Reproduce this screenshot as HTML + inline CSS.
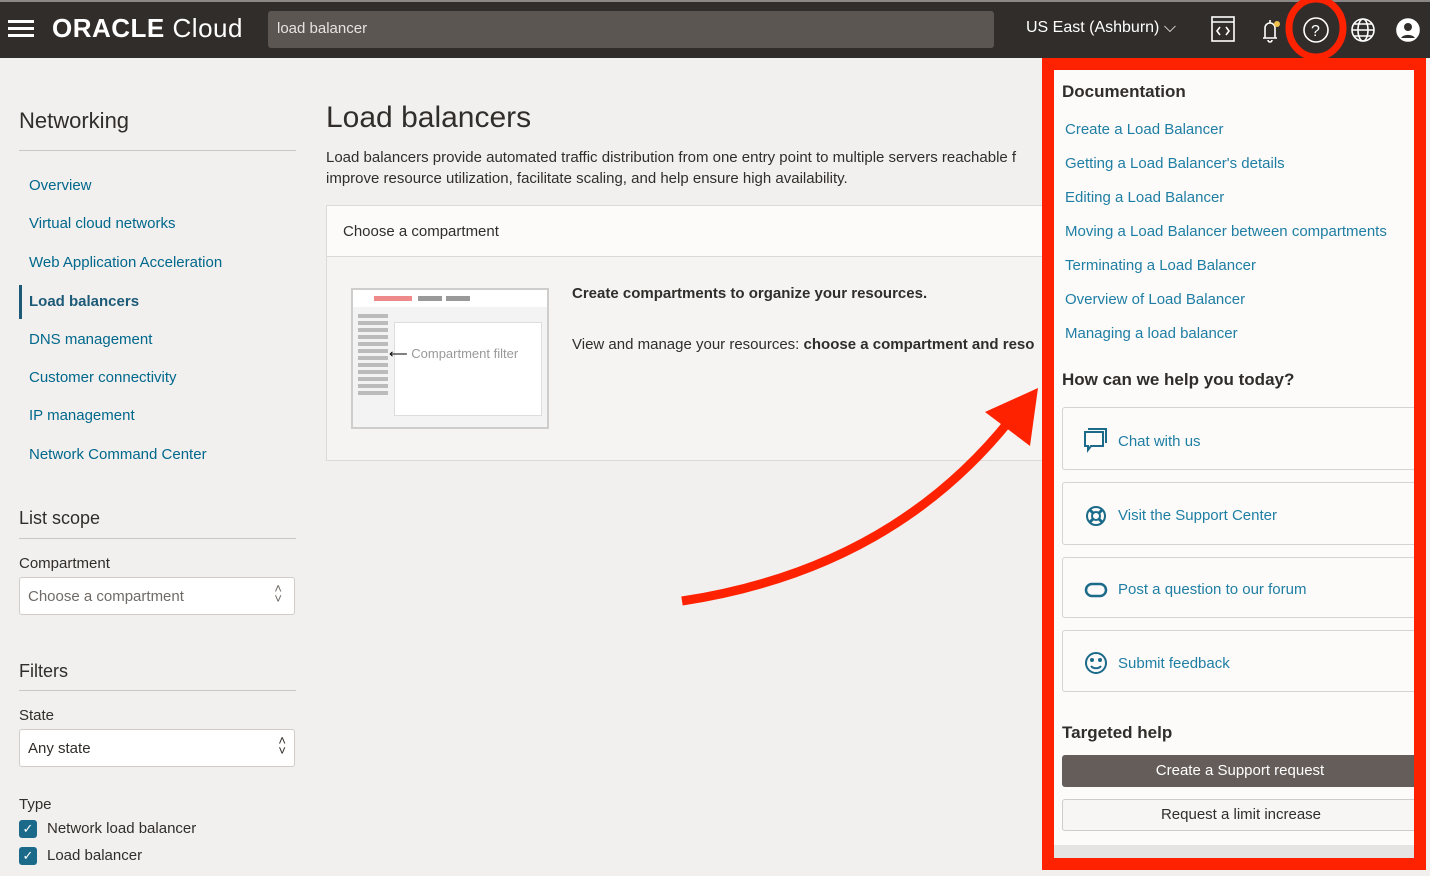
<!DOCTYPE html>
<html><head><meta charset="utf-8"><style>
*{box-sizing:border-box;margin:0;padding:0}
body{width:1430px;height:876px;overflow:hidden;background:#f2f0ee;font-family:"Liberation Sans",sans-serif;color:#312d2a;position:relative}
.abs{position:absolute}
.hdr{left:0;top:0;width:1430px;height:58px;background:#312d2a;border-top:2px solid #8a8886}
.nav a{position:absolute;left:29px;font-size:15px;color:#00688c;text-decoration:none}
.lnk{position:absolute;left:1065px;font-size:15px;color:#1f7ea3}
.card{position:absolute;left:1062px;width:370px;background:#fcfbfa;border:1.5px solid #d6d3d0;border-radius:3px;font-size:15px;color:#1f7ea3}
.card span{position:absolute;left:55px}
.sel{position:absolute;left:19px;width:276px;height:38px;background:#fff;border:1px solid #cfccc9;border-radius:3px;font-size:15px;padding:10px 8px}
.chk{position:absolute;left:19px;width:18px;height:18px;background:#1c6a8a;border-radius:3px;color:#fff;font-size:13px;text-align:center;line-height:18px}
</style></head><body>
<div class="abs hdr">
 <div class="abs" style="left:8px;top:18px;width:26px;height:3px;background:#fff;box-shadow:0 7px 0 #fff,0 14px 0 #fff"></div>
 <div class="abs" style="left:52px;top:11px;color:#fff;font-size:26px;letter-spacing:0.5px;white-space:nowrap"><b style="font-weight:700">ORACLE</b> <span style="font-weight:300">Cloud</span></div>
 <div class="abs" style="left:268px;top:9px;width:726px;height:37px;background:#5b5652;border-radius:3px;color:#e6e3e0;font-size:15px;padding:9px 9px">load balancer</div>
 <div class="abs" style="left:1026px;top:17px;color:#fff;font-size:16px">US East (Ashburn) ⌵</div>
 <svg class="abs" style="left:1208px;top:10px" width="220" height="36" fill="none" stroke="#fff" stroke-width="1.6">
  <rect x="4" y="5" width="22" height="24"/><line x1="4" y1="10" x2="26" y2="10"/><path d="M12 15l-3 4 3 4M18 15l3 4-3 4"/>
  <path d="M55 26h14M57 26v-10a5 5 0 0110 0v10M62 8v3M60 28a2 2 0 004 0"/><circle cx="69" cy="12" r="3" fill="#f2c14e" stroke="none"/>
  <circle cx="108" cy="18" r="12"/><text x="103" y="24" fill="#fff" stroke="none" font-size="16" font-family="Liberation Sans">?</text>
  <circle cx="155" cy="18" r="11"/><ellipse cx="155" cy="18" rx="5" ry="11"/><line x1="144" y1="18" x2="166" y2="18"/><line x1="146" y1="12" x2="164" y2="12"/><line x1="146" y1="24" x2="164" y2="24"/>
  <circle cx="200" cy="18" r="11" fill="#fff"/><circle cx="200" cy="15" r="4" fill="#312d2a" stroke="none"/><path d="M193 26a8 6 0 0114 0" fill="#312d2a" stroke="none"/>
 </svg>
</div>
<div class="abs" style="left:19px;top:108px;font-size:22px;font-weight:300;color:#312d2a">Networking</div>
<div class="abs" style="left:19px;top:150px;width:277px;height:1px;background:#c9c6c3"></div>
<div class="nav">
<a style="top:177px">Overview</a><a style="top:215px">Virtual cloud networks</a><a style="top:254px">Web Application Acceleration</a>
<a style="top:293px;font-weight:700;color:#1c5a78">Load balancers</a><a style="top:331px">DNS management</a><a style="top:369px">Customer connectivity</a><a style="top:407px">IP management</a><a style="top:446px">Network Command Center</a>
</div>
<div class="abs" style="left:19px;top:285px;width:3px;height:34px;background:#1c5a78"></div>
<div class="abs" style="left:19px;top:508px;font-size:18px;font-weight:300">List scope</div>
<div class="abs" style="left:19px;top:538px;width:277px;height:1px;background:#c9c6c3"></div>
<div class="abs" style="left:19px;top:555px;font-size:15px">Compartment</div>
<div class="sel" style="top:577px;color:#6f6a66">Choose a compartment<span style="position:absolute;right:12px;top:6px;font-size:13px;line-height:10px">˄<br>˅</span></div>
<div class="abs" style="left:19px;top:661px;font-size:18px;font-weight:300">Filters</div>
<div class="abs" style="left:19px;top:690px;width:277px;height:1px;background:#c9c6c3"></div>
<div class="abs" style="left:19px;top:707px;font-size:15px">State</div>
<div class="sel" style="top:729px">Any state<span style="position:absolute;right:8px;top:6px;font-size:13px;line-height:10px">˄<br>˅</span></div>
<div class="abs" style="left:19px;top:796px;font-size:15px">Type</div>
<div class="chk" style="top:820px">✓</div><div class="abs" style="left:47px;top:820px;font-size:15px">Network load balancer</div>
<div class="chk" style="top:847px">✓</div><div class="abs" style="left:47px;top:847px;font-size:15px">Load balancer</div>
<div class="abs" style="left:326px;top:101px;font-size:30px">Load balancers</div>
<div class="abs" style="left:326px;top:147px;width:720px;font-size:15px;line-height:21px;white-space:nowrap">Load balancers provide automated traffic distribution from one entry point to multiple servers reachable f<br>improve resource utilization, facilitate scaling, and help ensure high availability.</div>
<div class="abs" style="left:326px;top:205px;width:720px;height:256px;background:#f5f4f2;border:1px solid #dcd9d6"></div>
<div class="abs" style="left:327px;top:206px;width:720px;height:51px;background:#fcfbfa;border-bottom:1px solid #dcd9d6;font-size:15px;padding:17px 16px">Choose a compartment</div>
<div class="abs" style="left:351px;top:288px;width:198px;height:141px;border:2px solid #cfcdcb;background:#f3f3f3"></div>
<div class="abs" style="left:353px;top:290px;width:194px;height:17px;background:#fff"></div>
<div class="abs" style="left:374px;top:296px;width:38px;height:5px;background:#ef8a8a"></div>
<div class="abs" style="left:418px;top:296px;width:24px;height:5px;background:#999"></div>
<div class="abs" style="left:446px;top:296px;width:24px;height:5px;background:#999"></div>
<div class="abs" style="left:394px;top:322px;width:148px;height:94px;background:#fff;border:1px solid #ddd"></div>
<div class="abs" style="left:358px;top:314px;width:30px;height:82px;background:repeating-linear-gradient(#bbb 0 4px,transparent 4px 7px)"></div>
<div class="abs" style="left:389px;top:346px;font-size:13px;color:#999"><span style="color:#000">⟵</span> Compartment filter</div>
<div class="abs" style="left:572px;top:285px;font-size:15px;font-weight:700">Create compartments to organize your resources.</div>
<div class="abs" style="left:572px;top:336px;font-size:15px;white-space:nowrap">View and manage your resources: <b>choose a compartment and reso</b></div>
<!-- panel -->
<div class="abs" style="left:1042px;top:58px;width:384px;height:812px;background:#fcfbfa"></div>
<div class="abs" style="left:1054px;top:845px;width:360px;height:13px;background:#e6e4e2"></div>
<div class="abs" style="left:1062px;top:82px;font-size:17px;font-weight:700">Documentation</div>
<div class="lnk" style="top:121px">Create a Load Balancer</div>
<div class="lnk" style="top:155px">Getting a Load Balancer's details</div>
<div class="lnk" style="top:189px">Editing a Load Balancer</div>
<div class="lnk" style="top:223px">Moving a Load Balancer between compartments</div>
<div class="lnk" style="top:257px">Terminating a Load Balancer</div>
<div class="lnk" style="top:291px">Overview of Load Balancer</div>
<div class="lnk" style="top:325px">Managing a load balancer</div>
<div class="abs" style="left:1062px;top:370px;font-size:17px;font-weight:700">How can we help you today?</div>
<div class="card" style="top:407px;height:63px"><span style="top:25px">Chat with us</span></div>
<div class="card" style="top:482px;height:63px"><span style="top:24px">Visit the Support Center</span></div>
<div class="card" style="top:557px;height:61px"><span style="top:23px">Post a question to our forum</span></div>
<div class="card" style="top:630px;height:62px"><span style="top:24px">Submit feedback</span></div>
<svg class="abs" style="left:1082px;top:428px" width="30" height="250" fill="none" stroke="#1c6a8a" stroke-width="2">
 <path d="M3 4h18v14H9l-3 4v-4H3z"/><path d="M6 1h18v14"/>
 <circle cx="14" cy="88" r="9"/><circle cx="14" cy="88" r="4"/><path d="M8 82l3 3M20 82l-3 3M8 94l3-3M20 94l-3-3" stroke-width="3"/>
 <rect x="4" y="156" width="20" height="12" rx="6" stroke-width="2.5"/>
 <circle cx="14" cy="235" r="10"/><circle cx="10" cy="232" r="1" fill="#1c6a8a"/><circle cx="18" cy="232" r="1" fill="#1c6a8a"/><path d="M9 238a6 5 0 0010 0"/>
</svg>
<div class="abs" style="left:1062px;top:723px;font-size:17px;font-weight:700">Targeted help</div>
<div class="abs" style="left:1062px;top:755px;width:370px;height:32px;background:#655d59;border-radius:3px;color:#fff;font-size:15px;line-height:32px"><span style="position:absolute;left:0;width:356px;text-align:center">Create a Support request</span></div>
<div class="abs" style="left:1062px;top:799px;width:370px;height:32px;background:#f7f6f5;border:1px solid #cfccc9;border-radius:3px;font-size:15px;line-height:30px"><span style="position:absolute;left:0;width:356px;text-align:center">Request a limit increase</span></div>
<div class="abs" style="left:1042px;top:58px;width:384px;height:812px;border:12px solid #ff2200"></div>
<div class="abs" style="left:1426px;top:58px;width:4px;height:818px;background:#f2f0ee"></div>
<svg class="abs" style="left:0;top:0" width="1430" height="876" fill="none">
 <ellipse cx="1316" cy="28" rx="27" ry="29" stroke="#ff2200" stroke-width="7"/>
 <path d="M682 601C820 580 930 520 1010 420" stroke="#ff2200" stroke-width="9"/>
 <path d="M985 412L1038 388 1030 446Z" fill="#ff2200"/>
</svg>
</body></html>
